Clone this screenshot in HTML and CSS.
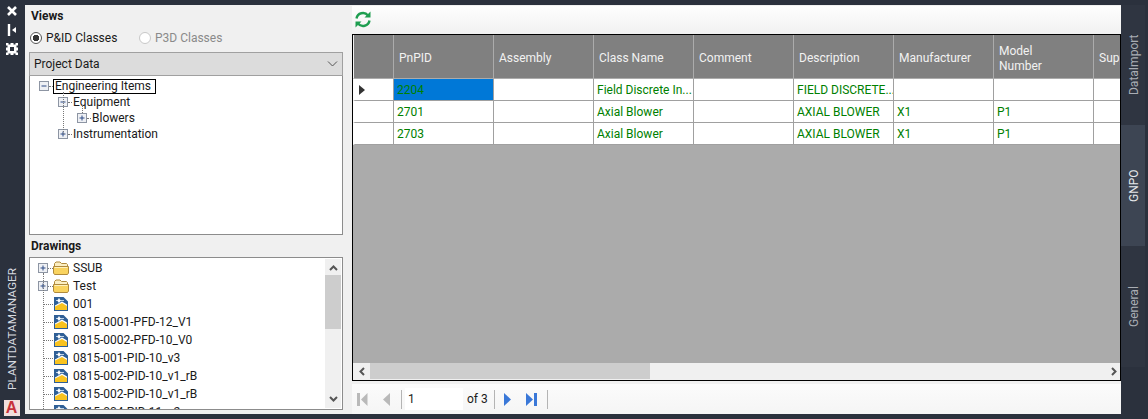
FILE: index.html
```html
<!DOCTYPE html>
<html lang="en">
<head>
  <meta charset="UTF-8">
  <title>PlantDataManager</title>
  <link rel="stylesheet" href="styles.css">
</head>
<body>
  <svg class="defs" width="0" height="0">
    <symbol id="plus" viewBox="0 0 10 10">
      <rect x="0.5" y="0.5" width="9" height="9" fill="#eef0f4" stroke="#8d95a3"/>
      <path d="M2.500 5h5M5 2.500v5" stroke="#2c4a86" fill="none"/>
    </symbol>
    <symbol id="minus" viewBox="0 0 10 10">
      <rect x="0.5" y="0.5" width="9" height="9" fill="#eef0f4" stroke="#8d95a3"/>
      <path d="M2.500 5h5" stroke="#2c4a86" fill="none"/>
    </symbol>
    <symbol id="folder" viewBox="0 0 16 14">
      <path d="M1.500 11V2.500L3 1h4l1.500 1.500h5l1 1V11z" fill="#fbeec2" stroke="#b08a3c"/>
      <path d="M0.500 5.500h15v6.500l-1 1.500h-13l-1-1.500z" fill="#f9d35f" stroke="#b08a3c"/>
      <path d="M1.500 6.500h13" stroke="#fdf0bd" fill="none"/>
    </symbol>
    <symbol id="dwg" viewBox="0 0 14 14">
      <rect x="0" y="0" width="14" height="14" fill="#2f5f96"/>
      <path d="M1 13V9l7-3.500 5 3V13z" fill="#f9c31f"/>
      <path d="M1 8.500l7-4 5 3v1.500l-5-3-7 3.500z" fill="#fff"/>
      <path d="M5 1v6M2 3.500h8" stroke="#bcd0e6" fill="none"/>
      <circle cx="5" cy="3.500" r="1.500" fill="#fff"/>
      <path d="M9.500 0H14v4.500z" fill="#fff"/>
    </symbol>
  </svg>

  <aside class="rail">
    <div class="rail-icons">
      <svg width="12" height="12" viewBox="0 0 12 12"><path d="M2 2l8 8M10 2l-8 8" stroke="#fff" stroke-width="2.600" fill="none"/></svg>
      <svg width="12" height="12" viewBox="0 0 12 12"><path d="M3 0v12" stroke="#fff" stroke-width="2.400" fill="none"/><path d="M10 3v6L6 6z" fill="#fff"/></svg>
      <svg width="12" height="12" viewBox="0 0 12 12"><path fill-rule="evenodd" d="M0 0h2.500v1.500h2V0h3v1.500h2V0H12v2.500h-1.500v2H12v3h-1.500v2H12V12H9.500v-1.500h-2V12h-3v-1.500h-2V12H0V9.500h1.500v-2H0v-3h1.500v-2H0zM4 4v4h4V4z" fill="#fff"/></svg>
    </div>
    <div class="rail-title">PLANTDATAMANAGER</div>
    <div class="rail-logo">A</div>
  </aside>

  <div class="panel">
    <section class="side">
      <div class="side-title">Views</div>
      <div class="radios">
        <label class="radio on"><span class="dot"></span>P&amp;ID Classes</label>
        <label class="radio off"><span class="dot"></span>P3D Classes</label>
      </div>
      <div class="combo">
        <span>Project Data</span>
        <svg width="11" height="6" viewBox="0 0 11 6"><path d="M1 0.500l4.500 4.500L10 0.500" stroke="#555" fill="none"/></svg>
      </div>
      <div class="tree">
        <div class="tree-row"><svg class="twist"><use href="#minus"/></svg><i class="stub"></i><span class="focus">Engineering Items</span></div>
        <div class="tree-row lvl1"><svg class="twist"><use href="#minus"/></svg><i class="stub"></i><span class="label">Equipment</span></div>
        <div class="tree-row lvl2"><svg class="twist"><use href="#plus"/></svg><i class="stub"></i><span class="label">Blowers</span></div>
        <div class="tree-row lvl1"><svg class="twist"><use href="#plus"/></svg><i class="stub"></i><span class="label">Instrumentation</span></div>
      </div>
      <div class="side-title drawings-title">Drawings</div>
      <div class="files">
        <div class="file-list">
          <div class="file"><svg class="twist"><use href="#plus"/></svg><i class="stub"></i><svg class="ico"><use href="#folder"/></svg>SSUB</div>
          <div class="file"><svg class="twist"><use href="#plus"/></svg><i class="stub"></i><svg class="ico"><use href="#folder"/></svg>Test</div>
          <div class="file leaf"><i class="stub long"></i><svg class="ico"><use href="#dwg"/></svg>001</div>
          <div class="file leaf"><i class="stub long"></i><svg class="ico"><use href="#dwg"/></svg>0815-0001-PFD-12_V1</div>
          <div class="file leaf"><i class="stub long"></i><svg class="ico"><use href="#dwg"/></svg>0815-0002-PFD-10_V0</div>
          <div class="file leaf"><i class="stub long"></i><svg class="ico"><use href="#dwg"/></svg>0815-001-PID-10_v3</div>
          <div class="file leaf"><i class="stub long"></i><svg class="ico"><use href="#dwg"/></svg>0815-002-PID-10_v1_rB</div>
          <div class="file leaf"><i class="stub long"></i><svg class="ico"><use href="#dwg"/></svg>0815-002-PID-10_v1_rB</div>
          <div class="file leaf"><i class="stub long"></i><svg class="ico"><use href="#dwg"/></svg>0815-004-PID-11_v2</div>
        </div>
        <div class="vscroll">
          <svg width="9" height="6" viewBox="0 0 9 6"><path d="M1 5l3.500-3.500L8 5" stroke="#555" stroke-width="2" fill="none"/></svg>
          <div class="vtrack"><div class="vthumb"></div></div>
          <svg width="9" height="6" viewBox="0 0 9 6"><path d="M1 1l3.500 3.500L8 1" stroke="#555" stroke-width="2" fill="none"/></svg>
        </div>
      </div>
    </section>

    <section class="main">
      <div class="toolbar">
        <svg width="18" height="17" viewBox="0 0 18 17">
          <path d="M2.500 7.500A6.500 6.500 0 0 1 14 4.500" stroke="#1e9e50" stroke-width="2.400" fill="none"/>
          <path d="M16.500 0.500v6h-6z" fill="#1e9e50"/>
          <path d="M15.500 9.500A6.500 6.500 0 0 1 4 12.500" stroke="#1e9e50" stroke-width="2.400" fill="none"/>
          <path d="M1.500 16.500v-6h6z" fill="#1e9e50"/>
        </svg>
      </div>
      <div class="grid">
        <div class="grid-body">
          <table class="data">
            <thead>
              <tr>
                <th class="rowhead"></th><th>PnPID</th><th>Assembly</th><th>Class Name</th><th>Comment</th><th>Description</th><th>Manufacturer</th><th>Model<br>Number</th><th>Supplier</th>
              </tr>
            </thead>
            <tbody>
              <tr>
                <td class="rowhead"><span class="cursor"></span></td><td class="sel">2204</td><td></td><td>Field Discrete In...</td><td></td><td>FIELD DISCRETE...</td><td></td><td></td><td></td>
              </tr>
              <tr>
                <td class="rowhead"></td><td>2701</td><td></td><td>Axial Blower</td><td></td><td>AXIAL BLOWER</td><td>X1</td><td>P1</td><td></td>
              </tr>
              <tr>
                <td class="rowhead"></td><td>2703</td><td></td><td>Axial Blower</td><td></td><td>AXIAL BLOWER</td><td>X1</td><td>P1</td><td></td>
              </tr>
            </tbody>
          </table>
        </div>
        <div class="hscroll">
          <svg width="6" height="9" viewBox="0 0 6 9"><path d="M5 1L1.500 4.500 5 8" stroke="#555" stroke-width="2" fill="none"/></svg>
          <div class="htrack"><div class="hthumb"></div></div>
          <svg width="6" height="9" viewBox="0 0 6 9"><path d="M1 1l3.500 3.500L1 8" stroke="#555" stroke-width="2" fill="none"/></svg>
        </div>
      </div>
      <div class="pager">
        <svg class="pg-first" width="11" height="13" viewBox="0 0 11 13"><path d="M0 0h3v13H0z" fill="#b9b9b9"/><path d="M10.500 0v13L4 6.500z" fill="#b9b9b9"/></svg>
        <svg class="pg-prev" width="7" height="13" viewBox="0 0 7 13"><path d="M7 0v13L0 6.500z" fill="#b9b9b9"/></svg>
        <i class="pg-sep"></i>
        <div class="pg-input">1</div>
        <span class="pg-of">of 3</span>
        <i class="pg-sep"></i>
        <svg class="pg-next" width="7" height="13" viewBox="0 0 7 13"><path d="M0 0v13l7-6.500z" fill="#3a78d8"/></svg>
        <svg class="pg-last" width="11" height="13" viewBox="0 0 11 13"><path d="M0 0v13l7-6.500z" fill="#3a78d8"/><path d="M8 0h3v13H8z" fill="#3a78d8"/></svg>
        <i class="pg-sep"></i>
      </div>
    </section>
  </div>

  <nav class="tabs">
    <div class="tab">DataImport</div>
    <div class="tab active">GNPO</div>
    <div class="tab">General</div>
  </nav>
</body>
</html>
```

FILE: styles.css
```css
html, body {
  margin: 0;
  height: 100%;
}
body {
  width: 1148px;
  height: 419px;
  overflow: hidden;
  display: flex;
  background-color: #2b313d;
  font-family: Roboto, "Noto Sans", sans-serif;
  font-size: 12px;
  color: #1a1a1a;
}
.defs {
  position: absolute;
}

/* left rail */
.rail {
  width: 25px;
  flex: none;
  display: flex;
  flex-direction: column;
  align-items: center;
  box-sizing: border-box;
  padding: 5px 2px 3px 0;
}
.rail-icons {
  display: flex;
  flex-direction: column;
  gap: 7px;
}
.rail-title {
  margin-top: auto;
  writing-mode: vertical-rl;
  transform: rotate(180deg);
  color: #d8dbe0;
  font-size: 11.800px;
  line-height: 14px;
}
.rail-logo {
  width: 16px;
  height: 16px;
  margin-top: 10px;
  background-color: #f3dedb;
  color: #c8323a;
  font-family: "Liberation Sans", sans-serif;
  font-weight: bold;
  font-size: 16px;
  line-height: 16px;
  text-align: center;
}

/* main panel */
.panel {
  width: 1096px;
  height: 409px;
  margin-top: 5px;
  flex: none;
  display: flex;
  background-color: #f0f0f0;
}
.side {
  width: 327px;
  flex: none;
  box-sizing: border-box;
  padding: 4px 9px 0 4px;
}
.side-title {
  margin-left: 2px;
  height: 15px;
  line-height: 15px;
  font-weight: bold;
}
.radios {
  display: flex;
  margin-top: 5px;
  height: 18px;
  align-items: center;
}
.radio {
  display: flex;
  align-items: center;
  gap: 4px;
  width: 110px;
  margin-left: 1px;
}
.radio.off {
  color: #8a8a8a;
  margin-left: -1px;
}
.dot {
  width: 12px;
  height: 12px;
  box-sizing: border-box;
  border: 1px solid #555;
  border-radius: 50%;
  background-color: #fff;
}
.radio.on .dot {
  background: radial-gradient(circle, #333 0 3px, #fff 3.500px);
}
.radio.off .dot {
  border-color: #c8c8c8;
}
.combo {
  height: 24px;
  margin-top: 5px;
  box-sizing: border-box;
  border: 1px solid #a0a0a0;
  background-color: #dcdcdc;
  display: flex;
  align-items: center;
  justify-content: space-between;
  padding: 0 4px;
}
.tree {
  position: relative;
  height: 159px;
  box-sizing: border-box;
  border: 1px solid #8c8c8c;
  border-top: 0;
  background-color: #fff;
  padding-top: 2px;
}
.tree-row {
  display: flex;
  align-items: center;
  height: 16px;
  padding-left: 9px;
}
.tree-row.lvl1 {
  padding-left: 28px;
}
.tree-row.lvl2 {
  padding-left: 47px;
}
.twist {
  width: 10px;
  height: 10px;
  flex: none;
}
.stub {
  width: 4px;
  flex: none;
  border-top: 1px dotted #777;
}
.stub.long {
  width: 10px;
  margin-left: 13px;
}
.file .twist + .stub {
  width: 5px;
}
.label {
  margin-left: 1px;
}
.focus {
  border: 1px solid #000;
  height: 13px;
  line-height: 13px;
  padding: 0 4px 0 1px;
}
.tree::before {
  content: "";
  position: absolute;
  left: 33px;
  top: 16px;
  height: 42px;
  border-left: 1px dotted #777;
}
.tree::after {
  content: "";
  position: absolute;
  left: 52px;
  top: 29px;
  height: 8px;
  border-left: 1px dotted #777;
}
.drawings-title {
  margin-top: 4px;
}
.files {
  position: relative;
  height: 153px;
  margin-top: 3px;
  box-sizing: border-box;
  border: 1px solid #8c8c8c;
  background-color: #fff;
  display: flex;
  overflow: hidden;
}
.files::before {
  content: "";
  position: absolute;
  left: 13px;
  top: 15px;
  bottom: 0;
  border-left: 1px dotted #777;
}
.file-list {
  flex: 1;
  padding-top: 1px;
}
.file {
  display: flex;
  align-items: center;
  height: 18px;
  padding-left: 8px;
  white-space: nowrap;
}
.file.leaf {
  padding-left: 0;
}
.ico {
  width: 16px;
  height: 14px;
  margin-right: 4px;
  flex: none;
}
.leaf .ico {
  width: 14px;
  margin-left: 1px;
  margin-right: 5px;
}
.vscroll {
  width: 16px;
  margin: 1px 1px 1px 0;
  background-color: #f0f0f0;
  display: flex;
  flex-direction: column;
  align-items: center;
  padding: 6px 0;
  box-sizing: border-box;
}
.vtrack {
  flex: 1;
  align-self: stretch;
  margin-top: 4px;
}
.vthumb {
  height: 54px;
  background-color: #cdcdcd;
}

/* right side */
.main {
  width: 769px;
  flex: none;
  display: flex;
  flex-direction: column;
}
.toolbar {
  height: 29px;
  box-sizing: border-box;
  padding: 5px 0 0 2px;
  background: linear-gradient(#fefefe, #f1f1f1);
  border-top: 1px solid #f0f0f0;
}
.grid {
  height: 347px;
  box-sizing: border-box;
  border: 1px solid #000;
  display: flex;
  flex-direction: column;
  overflow: hidden;
}
.grid-body {
  flex: 1;
  background-color: #ababab;
  overflow: hidden;
}
.data {
  border-collapse: separate;
  border-spacing: 0;
  table-layout: fixed;
  width: 767px;
}
.data th {
  width: 100px;
  height: 44px;
  box-sizing: border-box;
  padding: 4px 0 0 5px;
  background-color: #808080;
  color: #f2f2f2;
  font-weight: normal;
  text-align: left;
  line-height: 15px;
  border-right: 1px solid #ababab;
  border-bottom: 1px solid #ababab;
  white-space: nowrap;
  overflow: hidden;
}
.data th:last-child {
  width: 27px;
  border-right: 0;
}
.data th.rowhead {
  width: 41px;
  border-left: 1px solid #f0f0f0;
}
.data td {
  height: 22px;
  box-sizing: border-box;
  padding: 0 0 0 3px;
  background-color: #fff;
  color: #008000;
  border-right: 1px solid #a0a0a0;
  border-bottom: 1px solid #a0a0a0;
  white-space: nowrap;
  overflow: hidden;
}
.data td:last-child {
  border-right: 0;
}
.data td.rowhead {
  padding: 0;
  border-left: 2px solid #fff;
}
.data td.sel {
  background-color: #0078d7;
}
.cursor {
  display: block;
  width: 0;
  height: 0;
  margin-left: 4px;
  border-style: solid;
  border-width: 5px 0 5px 6px;
  border-color: transparent transparent transparent #333;
}
.hscroll {
  height: 17px;
  flex: none;
  background-color: #f0f0f0;
  display: flex;
  align-items: center;
  padding: 0 3px 0 6px;
}
.htrack {
  flex: 1;
  align-self: stretch;
  margin: 0 4px 1px 5px;
}
.hthumb {
  width: 280px;
  height: 100%;
  background-color: #cdcdcd;
}
.pager {
  height: 30px;
  margin-top: 3px;
  background: linear-gradient(#fbfbfb, #f5f5f5);
  display: flex;
  align-items: center;
  padding-left: 5px;
}
.pg-prev {
  margin-left: 15px;
}
.pg-sep {
  width: 1px;
  height: 19px;
  margin-left: 11px;
  background-color: #b4b4b4;
}
.pg-input {
  width: 55px;
  height: 22px;
  line-height: 22px;
  margin-left: 3px;
  padding-left: 3px;
  background-color: #fff;
}
.pg-of {
  margin-left: 4px;
}
.pg-of + .pg-sep {
  margin-left: 6px;
}
.pg-next {
  margin-left: 9px;
}
.pg-last {
  margin-left: 15px;
}
.pg-last + .pg-sep {
  margin-left: 10px;
}

/* dock tabs */
.tabs {
  width: 27px;
  flex: none;
  margin-top: 5px;
  display: flex;
  flex-direction: column;
}
.tab {
  height: 120px;
  width: 24px;
  box-sizing: border-box;
  padding-right: 3px;
  background-color: #2f3541;
  color: #a9adb4;
  writing-mode: vertical-rl;
  transform: rotate(180deg);
  text-align: center;
  line-height: 21px;
}
.tab.active {
  background-color: #3d4553;
  color: #e6e8eb;
  height: 121px;
}
.tab:last-child {
  height: 121px;
}
```
